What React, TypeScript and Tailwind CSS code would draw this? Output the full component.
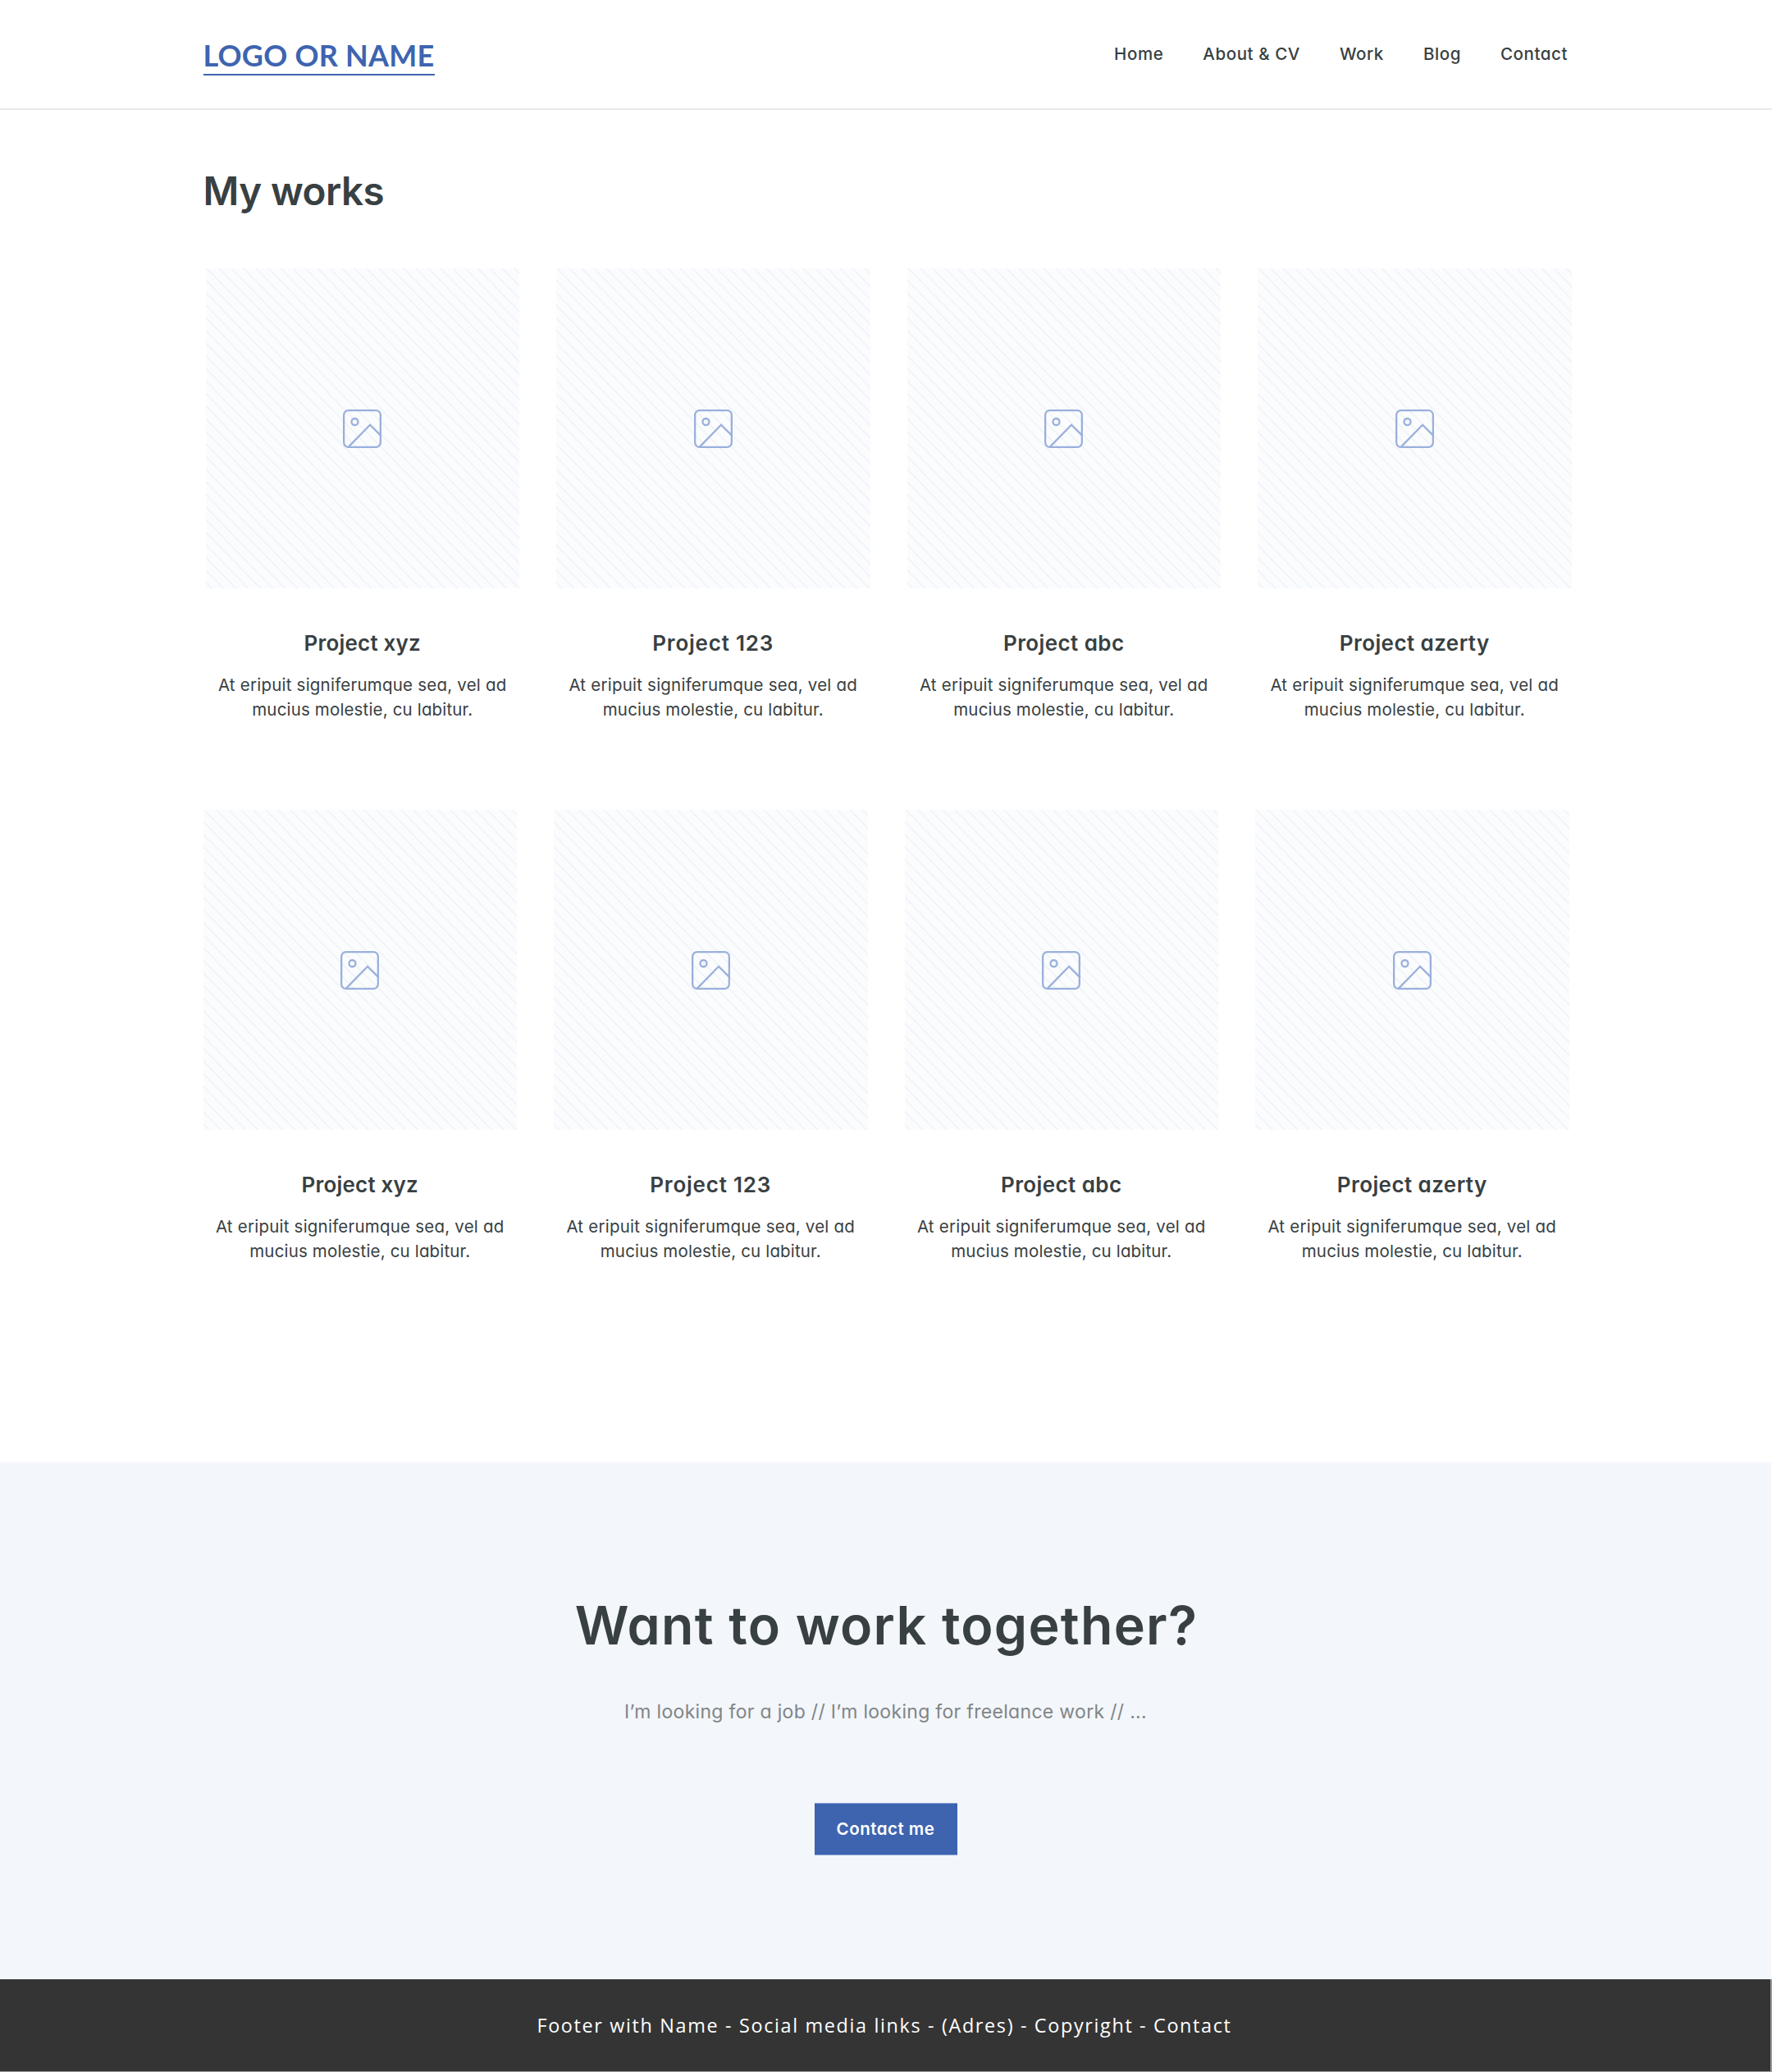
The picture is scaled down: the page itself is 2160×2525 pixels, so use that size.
import React from "react";

type Project = { title: string; spacing: string };

const projects: Project[] = [
  { title: "Project xyz", spacing: "tracking-[0.2px]" },
  { title: "Project 123", spacing: "tracking-[0.8px]" },
  { title: "Project abc", spacing: "tracking-[0.4px]" },
  { title: "Project azerty", spacing: "tracking-[0.42px]" },
];

const links = ["Home", "About & CV", "Work", "Blog", "Contact"];

// Stripes run from edge to edge of the 382.5 x 390 tile.
const stripes = Array.from({ length: 52 }, (_, i) => (i - 26) * 15 + 1);

function Placeholder() {
  return (
    <div className="relative h-[390px] w-full overflow-hidden bg-[#fbfcfe]">
      <svg className="absolute inset-0 h-full w-full" viewBox="0 0 382.5 390" preserveAspectRatio="none">
        {stripes.map((x) => (
          <line key={x} x1={x} y1={0} x2={x + 380.7} y2={390} stroke="#f0f3f7" strokeWidth={1.7} />
        ))}
      </svg>
      <div className="absolute inset-0 flex items-center justify-center">
        <svg className="h-[47px] w-[47px]" viewBox="0 0 47 47" fill="none" stroke="#9ab0dc" strokeWidth={2.3}>
          <rect x="1.15" y="1.15" width="44.7" height="44.7" rx="5.5" />
          <circle cx="14.5" cy="15" r="4" />
          <path d="M6.8 45.6 L33 18.8 L46 31.6" />
        </svg>
      </div>
    </div>
  );
}

function ProjectCard({ title, spacing }: Project) {
  return (
    <article className="flex flex-col text-center">
      <Placeholder />
      <h2 className={`mt-[49px] text-[26px] leading-[36px] font-semibold ${spacing}`}>{title}</h2>
      <p className="mt-[17.5px] text-[20.5px] leading-[30px] tracking-[0.22px]">
        At eripuit signiferumque sea, vel ad
        <br />
        <span className="tracking-[0.16px]">mucius molestie, cu labitur.</span>
      </p>
    </article>
  );
}

function ProjectRow({ className }: { className: string }) {
  return (
    <div className={`grid w-[1665px] grid-cols-4 gap-[45px] ${className}`}>
      {projects.map((p) => (
        <ProjectCard key={p.title} {...p} />
      ))}
    </div>
  );
}

export default function App() {
  return (
    <div className="flex h-[2525px] w-[2160px] flex-col overflow-hidden bg-white font-['Inter',sans-serif] text-[#384042] [font-feature-settings:'cv11']">
      <header className="flex h-[134px] shrink-0 items-start justify-between border-b-2 border-[#e6e9e9] pt-[47px] pr-[249px] pl-[247.5px]">
        <a className="h-[45px] w-[282.5px] border-b-2 border-[#3e64b0] font-['Lato',sans-serif] text-[36px] leading-[40px] font-bold tracking-[0.22px] whitespace-nowrap text-[#3e64b0]">
          LOGO OR NAME
        </a>
        <nav className="mt-[7px] flex gap-12 text-[20.5px] leading-6 font-medium tracking-[0.58px]">
          {links.map((l) => (
            <a key={l}>{l}</a>
          ))}
        </nav>
      </header>

      <main className="h-[1648px] shrink-0 pt-[69px] pl-[247.5px]">
        <h1 className="text-[47.5px] leading-[60px] font-semibold tracking-[-0.55px]">My works</h1>
        <ProjectRow className="mt-16 ml-[3px]" />
        <ProjectRow className="mt-[107.5px]" />
      </main>

      <section className="flex h-[630px] w-[2159px] shrink-0 flex-col items-center bg-[#f3f6fb] pt-[158.5px]">
        <h2 className="pl-[2px] text-[64.5px] leading-[80px] font-semibold tracking-[1.25px]">Want to work together?</h2>
        <p className="mt-[49px] text-[23px] leading-8 tracking-[0.31px] text-[#808586]">
          I’m looking for a job // I’m looking for freelance work // ...
        </p>
        <a className="mt-[95.5px] flex h-[64px] w-[174px] items-center justify-center border-y border-[#8fa6d3] bg-[#3e64b0] text-[20.5px] font-semibold tracking-[0.5px] text-white">
          Contact me
        </a>
      </section>

      <footer className="flex h-[113px] shrink-0 items-center justify-center border-r-2 border-b border-[#999999] bg-[#343434] pt-[2px] pr-[2px] font-['Open_Sans',sans-serif] text-[23.4px] tracking-[1.65px] text-white">
        Footer with Name - Social media links - (Adres) - Copyright - Contact
      </footer>
    </div>
  );
}
